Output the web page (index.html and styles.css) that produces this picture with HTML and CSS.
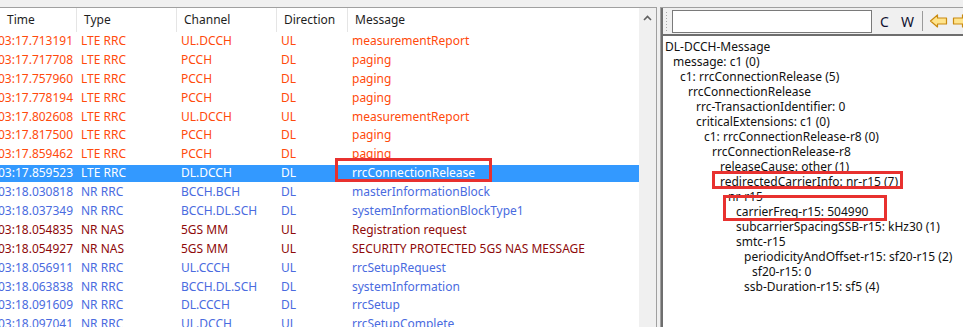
FILE: index.html
```html
<!DOCTYPE html>
<html>
    <head>
        <meta name="viewport" content="width=device-width">
        <title>Trace Viewer</title>
        <link rel="stylesheet" href="styles.css">
    </head>
    <body>
        <div class="app">
            <div class="list-pane">
                <div class="list">
                    <div class="head">
                        <div class="c time">Time</div>
                        <div class="c type">Type</div>
                        <div class="c chan">Channel</div>
                        <div class="c dir">Direction</div>
                        <div class="c msg">Message</div>
                    </div>
                    <div class="row lte"><span class="c time">03:17.713191</span><span class="c type">LTE RRC</span><span class="c chan">UL.DCCH</span><span class="c dir">UL</span><span class="c msg">measurementReport</span></div>
                    <div class="row lte"><span class="c time">03:17.717708</span><span class="c type">LTE RRC</span><span class="c chan">PCCH</span><span class="c dir">DL</span><span class="c msg">paging</span></div>
                    <div class="row lte"><span class="c time">03:17.757960</span><span class="c type">LTE RRC</span><span class="c chan">PCCH</span><span class="c dir">DL</span><span class="c msg">paging</span></div>
                    <div class="row lte"><span class="c time">03:17.778194</span><span class="c type">LTE RRC</span><span class="c chan">PCCH</span><span class="c dir">DL</span><span class="c msg">paging</span></div>
                    <div class="row lte"><span class="c time">03:17.802608</span><span class="c type">LTE RRC</span><span class="c chan">UL.DCCH</span><span class="c dir">UL</span><span class="c msg">measurementReport</span></div>
                    <div class="row lte"><span class="c time">03:17.817500</span><span class="c type">LTE RRC</span><span class="c chan">PCCH</span><span class="c dir">DL</span><span class="c msg">paging</span></div>
                    <div class="row lte"><span class="c time">03:17.859462</span><span class="c type">LTE RRC</span><span class="c chan">PCCH</span><span class="c dir">DL</span><span class="c msg">paging</span></div>
                    <div class="row sel"><span class="c time">03:17.859523</span><span class="c type">LTE RRC</span><span class="c chan">DL.DCCH</span><span class="c dir">DL</span><span class="c msg marked">rrcConnectionRelease</span></div>
                    <div class="row nr"><span class="c time">03:18.030818</span><span class="c type">NR RRC</span><span class="c chan">BCCH.BCH</span><span class="c dir">DL</span><span class="c msg">masterInformationBlock</span></div>
                    <div class="row nr"><span class="c time">03:18.037349</span><span class="c type">NR RRC</span><span class="c chan">BCCH.DL.SCH</span><span class="c dir">DL</span><span class="c msg">systemInformationBlockType1</span></div>
                    <div class="row nas"><span class="c time">03:18.054835</span><span class="c type">NR NAS</span><span class="c chan">5GS MM</span><span class="c dir">UL</span><span class="c msg">Registration request</span></div>
                    <div class="row nas"><span class="c time">03:18.054927</span><span class="c type">NR NAS</span><span class="c chan">5GS MM</span><span class="c dir">UL</span><span class="c msg">SECURITY PROTECTED 5GS NAS MESSAGE</span></div>
                    <div class="row nr"><span class="c time">03:18.056911</span><span class="c type">NR RRC</span><span class="c chan">UL.CCCH</span><span class="c dir">UL</span><span class="c msg">rrcSetupRequest</span></div>
                    <div class="row nr"><span class="c time">03:18.063838</span><span class="c type">NR RRC</span><span class="c chan">BCCH.DL.SCH</span><span class="c dir">DL</span><span class="c msg">systemInformation</span></div>
                    <div class="row nr"><span class="c time">03:18.091609</span><span class="c type">NR RRC</span><span class="c chan">DL.CCCH</span><span class="c dir">DL</span><span class="c msg">rrcSetup</span></div>
                    <div class="row nr"><span class="c time">03:18.097041</span><span class="c type">NR RRC</span><span class="c chan">UL.DCCH</span><span class="c dir">UL</span><span class="c msg">rrcSetupComplete</span></div>
                </div>
                <div class="vscroll">
                    <svg width="9" height="6" viewBox="0 0 9 6"><polyline points="1,5 4.5,1.5 8,5" fill="none" stroke="#606060" stroke-width="1.6"/></svg>
                </div>
            </div>

            <div class="detail-pane">
                <div class="toolbar">
                    <div class="grip"></div>
                    <input class="search" type="text">
                    <span class="tb-btn">C</span>
                    <span class="tb-btn">W</span>
                    <div class="tb-sep"></div>
                    <svg class="arrow" width="19" height="14" viewBox="0 0 19 14"><path d="M1.5 7 L8.5 1 L8.5 4 L17.5 4 L17.5 10 L8.5 10 L8.5 13 Z" fill="#ffe48c" stroke="#c98a10" stroke-width="1.2" stroke-linejoin="round"/></svg>
                    <svg class="arrow" width="19" height="14" viewBox="0 0 19 14"><path d="M17.5 7 L10.5 1 L10.5 4 L1.5 4 L1.5 10 L10.5 10 L10.5 13 Z" fill="#ffe48c" stroke="#c98a10" stroke-width="1.2" stroke-linejoin="round"/></svg>
                </div>
                <div class="tree">
                    <div class="n l0">DL-DCCH-Message</div>
                    <div class="n l1">message: c1 (0)</div>
                    <div class="n l2">c1: rrcConnectionRelease (5)</div>
                    <div class="n l3">rrcConnectionRelease</div>
                    <div class="n l4">rrc-TransactionIdentifier: 0</div>
                    <div class="n l4">criticalExtensions: c1 (0)</div>
                    <div class="n l5">c1: rrcConnectionRelease-r8 (0)</div>
                    <div class="n l6">rrcConnectionRelease-r8</div>
                    <div class="n l7">releaseCause: other (1)</div>
                    <div class="n l7">redirectedCarrierInfo: nr-r15 (7)</div>
                    <div class="n l8">nr-r15</div>
                    <div class="n l9">carrierFreq-r15: 504990</div>
                    <div class="n l9">subcarrierSpacingSSB-r15: kHz30 (1)</div>
                    <div class="n l9">smtc-r15</div>
                    <div class="n l10">periodicityAndOffset-r15: sf20-r15 (2)</div>
                    <div class="n l11">sf20-r15: 0</div>
                    <div class="n l10">ssb-Duration-r15: sf5 (4)</div>
                    <div class="mark mark-redirect"></div>
                    <div class="mark mark-freq"></div>
                </div>
            </div>
        </div>
    </body>
</html>
```

FILE: styles.css
```css
body{
    margin:0;
    background:#f0f0f0;
    font-family:"Noto Sans", "Open Sans", sans-serif;
    font-size:12px;
    overflow:hidden;
}
.app{display:flex;padding-top:7px;height:320px}

/* message list */
.list-pane
{
    display:flex;
    flex:none;
    width:657px;
    box-sizing:border-box;
    background:white;
    border-top:1px solid #a0a0a0;
    border-right:1px solid #a0a0a0;
    overflow:hidden;
}
.list{width:639px;flex:none;position:relative;overflow:hidden}
.head{display:flex;height:24px;align-items:center;color:#1e1e1e}
.head .c{height:24px;line-height:24px;padding-left:7px;box-sizing:border-box;border-right:1px solid #e5e5e5}
.head .msg{border-right:none}
.row{display:flex;height:18.9px;line-height:18.9px;white-space:nowrap}
.row .c{padding-left:4px;box-sizing:border-box;overflow:hidden}
.row .time{padding-left:0;text-indent:-2px}
.c{flex:none}
.c.time{width:77px}
.c.type{width:100px}
.c.chan{width:100px}
.c.dir{width:71px}
.c.msg{flex:1}
.lte{color:#ff4a0c}
.nr{color:#4a6be0}
.nas{color:#8e0a0a}
.sel{color:white;background:#3399ff;background-clip:content-box;padding:1px 0;box-sizing:border-box;line-height:16.9px;height:18.9px}
.sel .c{overflow:visible}
.marked{position:relative}
.marked::after{content:"";position:absolute;left:-13px;top:-7px;width:157px;height:24px;border:3px solid #e8312f;box-sizing:border-box}

.vscroll{width:17px;flex:none;background:#f0f0f0;display:flex;justify-content:center;align-items:flex-start;padding-top:7px;box-sizing:border-box}

/* decoded tree */
.detail-pane
{
    flex:1;
    min-width:0;
    margin-left:3px;
    border-top:1px solid #a0a0a0;
    border-left:1px solid #a0a0a0;
    display:flex;
    flex-direction:column;
}
.toolbar
{
    display:flex;
    align-items:center;
    height:26px;
    border-left:2px solid #6e6e6e;
    padding-left:2px;
    background:#f0f0f0;
    overflow:hidden;
}
.grip{width:3px;flex:none;height:20px;margin-right:4px;background:radial-gradient(circle, #a8a8a8 0.8px, transparent 1px) 0 0/3px 3px}
.search{width:200px;flex:none;height:23px;box-sizing:border-box;border:1px solid #7a7a7a;outline:none;margin:0;padding:0}
.tb-btn{font-size:14px;color:#101030;width:23px;flex:none;text-align:center}
.tb-btn:first-of-type{margin-left:1px}
.tb-sep{width:1px;flex:none;height:20px;background:#9a9a9a;margin:0 6px 0 3px}
.arrow{margin-right:4px;flex:none}
.tree
{
    flex:1;
    position:relative;
    background:white;
    border-top:2px solid #6e6e6e;
    border-left:2px solid #6e6e6e;
    padding-top:3px;
    color:#111;
    overflow:hidden;
}
.n{height:15px;line-height:15px;white-space:nowrap;padding-left:2px}
.l1{padding-left:10px}
.l2{padding-left:17px}
.l3{padding-left:25px}
.l4{padding-left:33px}
.l5{padding-left:41px}
.l6{padding-left:49px}
.l7{padding-left:57px}
.l8{padding-left:65px}
.l9{padding-left:73px}
.l10{padding-left:81px}
.l11{padding-left:89px}
.mark{position:absolute;border:3px solid #e8312f;box-sizing:border-box}
.mark-redirect{left:49px;top:135px;width:191px;height:18px}
.mark-freq{left:60px;top:159px;width:164px;height:26px}
```
